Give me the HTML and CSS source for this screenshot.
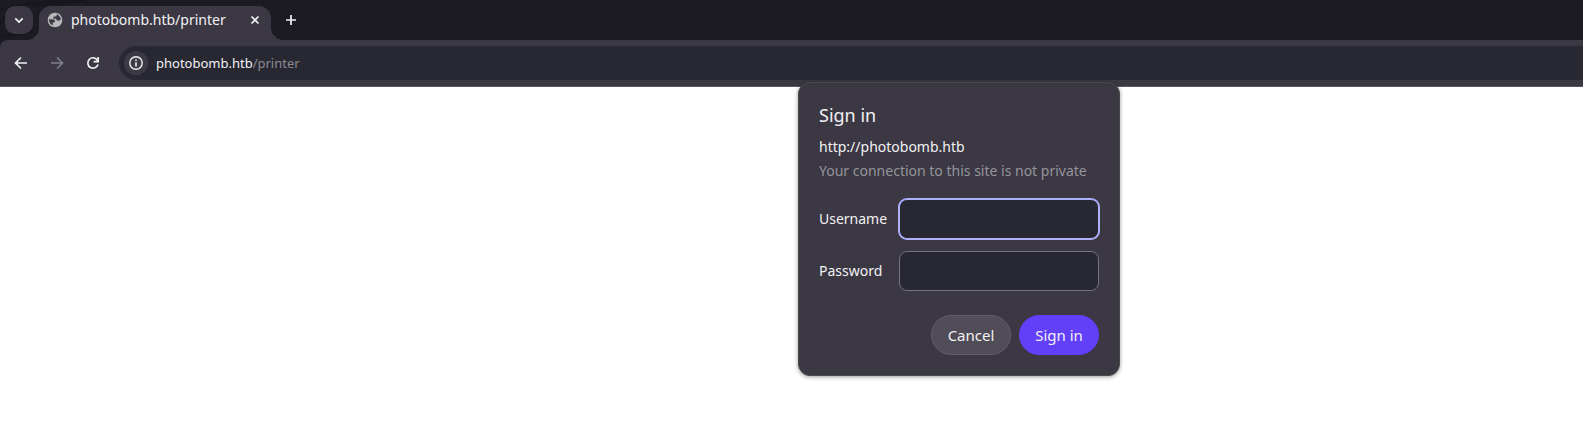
FILE: index.html
```html
<!DOCTYPE html>
<html lang="en">
<head>
<meta charset="utf-8">
<title>photobomb.htb/printer</title>
<link rel="stylesheet" href="styles.css">
</head>
<body>
<header class="browser">
  <div class="tab-strip">
    <svg class="strip-art" viewBox="0 0 160 40" aria-hidden="true"><path d="M0 10C20 3 40 1 84 1M0 24L14 4M32 5L80 2M84 0l4 4M0 36l34-4" /></svg>
    <button class="tab-search" type="button" aria-label="Search tabs">
      <svg width="28" height="28" viewBox="0 0 28 28"><path class="line" d="M10.300 12.300L14 16l3.700-3.700"/></svg>
    </button>
    <div class="tab">
      <svg class="favicon" width="16" height="16" viewBox="0 0 16 16" aria-hidden="true"><circle cx="8" cy="8" r="7.300" fill="#b8b8ba"/><path fill="#3b3843" d="M2 7.200h3.500c1.500 0 2.500.8 2.500 2v1.100H5.800v3C3.500 12.500 2 10.400 2 8zM9.600 2.300c2.200.7 4 2.700 4.300 5-.6.900-1.400 1.400-2.600 1.400-1.500 0-2-.8-2-2H6.500V4.500h2c.7 0 1.100-.4 1.100-1z"/></svg>
      <span class="tab-title">photobomb.htb/printer</span>
      <button class="icon-button tab-close" type="button" aria-label="Close tab">
        <svg width="16" height="16" viewBox="0 0 16 16"><path class="line" d="M4.500 4.500l7 7M11.500 4.500l-7 7"/></svg>
      </button>
    </div>
    <button class="icon-button new-tab" type="button" aria-label="New tab">
      <svg width="16" height="16" viewBox="0 0 16 16"><path class="line" d="M8 3v10M3 8h10"/></svg>
    </button>
  </div>
  <div class="toolbar">
    <nav class="navigation" aria-label="History">
      <button class="icon-button" type="button" aria-label="Back"><svg width="16" height="16" viewBox="0 0 16 16"><path class="line" d="M14 8H3M8 2.500L2.500 8 8 13.500"/></svg></button>
      <button class="icon-button" type="button" aria-label="Forward" disabled><svg width="16" height="16" viewBox="0 0 16 16"><path class="line" d="M2 8h11M8 2.500L13.500 8 8 13.500"/></svg></button>
      <button class="icon-button" type="button" aria-label="Reload"><svg width="16" height="16" viewBox="0 0 16 16"><path class="line" d="M13 9.500A5.200 5.200 0 1 1 12.300 5L13 6M13.200 2v4.600H8.700"/></svg></button>
    </nav>
    <div class="omnibox">
      <button class="site-info" type="button" aria-label="View site information"><svg width="16" height="16" viewBox="0 0 16 16"><circle cx="8" cy="8" r="6.200" fill="none" stroke="currentColor" stroke-width="1.400"/><path fill="currentColor" d="M7.200 7.200h1.600V11.500H7.200zM7.200 4.500h1.600v1.600H7.200z"/></svg></button>
      <span class="address">photobomb.htb<span class="path">/printer</span></span>
    </div>
  </div>
</header>
<main class="page"></main>
<section class="dialog" role="dialog" aria-labelledby="dialog-title">
  <h1 class="dialog-title" id="dialog-title">Sign in</h1>
  <p class="origin">http://photobomb.htb</p>
  <p class="warning">Your connection to this site is not private</p>
  <form>
    <div class="fields">
      <label for="username">Username</label>
      <input class="focused" id="username" type="text">
      <label for="password">Password</label>
      <input id="password" type="password">
    </div>
    <div class="actions">
      <button class="action" type="button">Cancel</button>
      <button class="action primary" type="submit">Sign in</button>
    </div>
  </form>
</section>
</body>
</html>
```
FILE: styles.css
```css
* { box-sizing: border-box; }

body {
  margin: 0;
  background: #fff;
  color: #f2f1f4;
  font: 14px/24px "Noto Sans", "Open Sans", sans-serif;
}

button {
  padding: 0;
  border: 0;
  background: none;
  color: inherit;
  font: inherit;
}

svg { display: block; }

.line {
  fill: none;
  stroke: currentColor;
  stroke-width: 1.7;
}

.browser { background: #1c1a23; }

.tab-strip {
  position: relative;
  display: flex;
  align-items: flex-end;
  height: 40px;
  padding-left: 5px;
}

.strip-art {
  position: absolute;
  top: 0;
  left: 0;
  width: 160px;
  height: 40px;
  fill: none;
  stroke: #17151d;
  stroke-width: 2;
}

.tab-search {
  position: relative;
  width: 28px;
  height: 28px;
  margin: 0 6px 6px 0;
  border-radius: 10px;
  background: #3b3843;
}

.tab {
  position: relative;
  display: flex;
  align-items: center;
  width: 232px;
  height: 34px;
  padding: 0 8px 6px;
  border-radius: 12px 12px 0 0;
  background: #3b3843;
}

.tab::before,
.tab::after {
  content: "";
  position: absolute;
  bottom: 0;
  width: 12px;
  height: 12px;
}

.tab::before {
  right: 100%;
  background: radial-gradient(circle at 0 0, transparent 12px, #3b3843 12px);
}

.tab::after {
  left: 100%;
  background: radial-gradient(circle at 100% 0, transparent 12px, #3b3843 12px);
}

.tab-title {
  flex: 1;
  margin-left: 8px;
  white-space: nowrap;
}

.icon-button {
  display: grid;
  place-items: center;
  width: 28px;
  height: 28px;
}

.icon-button:disabled { color: #817e88; }

.tab-close { width: 16px; }

.new-tab { margin: 0 0 6px 6px; }

.toolbar {
  display: flex;
  align-items: center;
  gap: 12px;
  height: 47px;
  padding: 6px 0 6px 7px;
  border-bottom: 1px solid #5b5763;
  border-top-left-radius: 8px;
  background: #3b3843;
}

.navigation {
  display: flex;
  gap: 8px;
}

.omnibox {
  display: flex;
  flex: 1;
  align-items: center;
  gap: 8px;
  height: 34px;
  padding-left: 5px;
  border-radius: 17px 0 0 17px;
  background: #282833;
  font-size: 13px;
}

.site-info {
  display: grid;
  place-items: center;
  width: 24px;
  height: 24px;
  border-radius: 50%;
  background: #3b3a44;
}

.path { color: #8b8a92; }

.dialog {
  position: absolute;
  top: 82px;
  left: 798px;
  width: 322px;
  padding: 20px;
  border: 1px solid #4a4a4a;
  border-radius: 12px;
  background: #3b3843;
  box-shadow: 0 1px 4px rgba(0, 0, 0, 0.4);
}

.dialog-title {
  margin: 0 0 8px;
  font-size: 18px;
  font-weight: 400;
}

.origin,
.warning { margin: 0; white-space: nowrap; }

.warning { color: #96949b; }

.fields {
  display: grid;
  grid-template-columns: auto 200px;
  justify-content: space-between;
  align-items: center;
  gap: 12px 0;
  margin-top: 16px;
}

.fields input {
  width: 100%;
  height: 40px;
  padding: 0 12px;
  border: 1px solid #75747a;
  border-radius: 8px;
  outline: 0;
  background: #282833;
  color: inherit;
  font: inherit;
}

.fields .focused {
  border-color: #acb0ff;
  box-shadow: 0 0 0 1px #acb0ff;
}

.actions {
  display: flex;
  justify-content: flex-end;
  gap: 8px;
  margin-top: 24px;
}

.action {
  width: 80px;
  height: 40px;
  border: 1px solid #605d68;
  border-radius: 20px;
  background: #504d58;
  font-size: 15px;
}

.primary {
  border-color: #623ff8;
  background: #623ff8;
}
```
